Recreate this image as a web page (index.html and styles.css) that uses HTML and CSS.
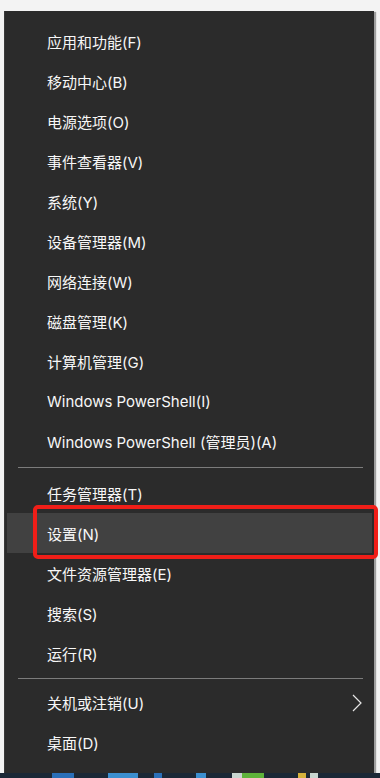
FILE: index.html
```html
<!DOCTYPE html>
<html lang="zh-CN">
<head>
    <meta charset="UTF-8">
    <meta name="viewport" content="width=device-width, initial-scale=1.0">
    <title>快速链接菜单</title>
    <link rel="stylesheet" href="styles.css">
</head>
<body>
    <div class="desktop">
        <div class="winx-menu">
            <div class="menu-item">应用和功能(F)</div>
            <div class="menu-item">移动中心(B)</div>
            <div class="menu-item">电源选项(O)</div>
            <div class="menu-item">事件查看器(V)</div>
            <div class="menu-item">系统(Y)</div>
            <div class="menu-item">设备管理器(M)</div>
            <div class="menu-item">网络连接(W)</div>
            <div class="menu-item">磁盘管理(K)</div>
            <div class="menu-item">计算机管理(G)</div>
            <div class="menu-item">Windows PowerShell(I)</div>
            <div class="menu-item">Windows PowerShell (管理员)(A)</div>

            <div class="menu-sep"></div>

            <div class="menu-item">任务管理器(T)</div>
            <div class="menu-item active">
                设置(N)
                <!-- 红框标注 -->
                <span class="annot"></span>
            </div>
            <div class="menu-item">文件资源管理器(E)</div>
            <div class="menu-item">搜索(S)</div>
            <div class="menu-item">运行(R)</div>

            <div class="menu-sep sep-bottom"></div>

            <div class="menu-item has-sub">
                <span>关机或注销(U)</span>
                <svg class="chevron" width="10" height="18" viewBox="0 0 10 18">
                    <path d="M1 1 L9 9 L1 17" fill="none" stroke="#e6e6e6" stroke-width="1.2"/>
                </svg>
            </div>
            <div class="menu-item">桌面(D)</div>
        </div>
    </div>

    <!-- 任务栏 -->
    <div class="taskbar">
        <span class="tb-icon tb-blue" style="margin-left: 52px; width: 22px"></span>
        <span class="tb-icon tb-blue2" style="margin-left: 34px; width: 30px"></span>
        <span class="tb-icon tb-blue" style="margin-left: 16px; width: 8px"></span>
        <span class="tb-icon tb-blue2" style="margin-left: 34px; width: 10px"></span>
        <span class="tb-icon tb-light" style="margin-left: 26px; width: 10px"></span>
        <span class="tb-icon tb-green" style="margin-left: 0; width: 22px"></span>
        <span class="tb-icon tb-yellow" style="margin-left: 34px; width: 8px"></span>
        <span class="tb-icon tb-light" style="margin-left: 4px; width: 8px"></span>
    </div>
</body>
</html>
```

FILE: styles.css
```css
* {
    margin: 0;
    padding: 0;
    box-sizing: border-box;
}

body {
    width: 380px;
    height: 778px;
    overflow: hidden;
    background: #f3f3f3;
    font-family: Inter, "Noto Sans CJK SC", sans-serif;
}

.desktop {
    padding: 11px 0 0 4px;
    height: 773px;
}

.winx-menu {
    width: 370px;
    height: 762px;
    background: #2b2b2b;
    padding: 10px 2px 11px 2px;
    box-shadow: 2px 1px 1px rgba(0,0,0,0.35);
    border-left: 1px solid #3a3a3a;
}

.menu-item {
    height: 40px;
    display: flex;
    align-items: center;
    padding-left: 40px;
    padding-right: 10px;
    color: #f7f7f7;
    font-size: 15px;
    position: relative;
}

.menu-item.active {
    background: #414141;
}

.has-sub {
    justify-content: space-between;
}

.chevron {
    margin-top: 1px;
}

.menu-sep {
    height: 1px;
    background: #7c7c7c;
    margin: 6px 9px 5px 11px;
}

.sep-bottom {
    margin: 5px 9px 3px 11px;
}

.annot {
    position: absolute;
    left: 26px;
    top: -8px;
    right: -6px;
    bottom: -6px;
    border: 4px solid #f01e18;
    border-radius: 5px;
}

.taskbar {
    height: 5px;
    background: #1b2836;
    display: flex;
}

.tb-icon {
    height: 5px;
    display: block;
}

.tb-blue {
    background: #2a6fb8;
}

.tb-blue2 {
    background: #3b8fd0;
}

.tb-light {
    background: #c9d6d0;
}

.tb-green {
    background: #5fb33a;
}

.tb-yellow {
    background: #d6b23c;
}
```
